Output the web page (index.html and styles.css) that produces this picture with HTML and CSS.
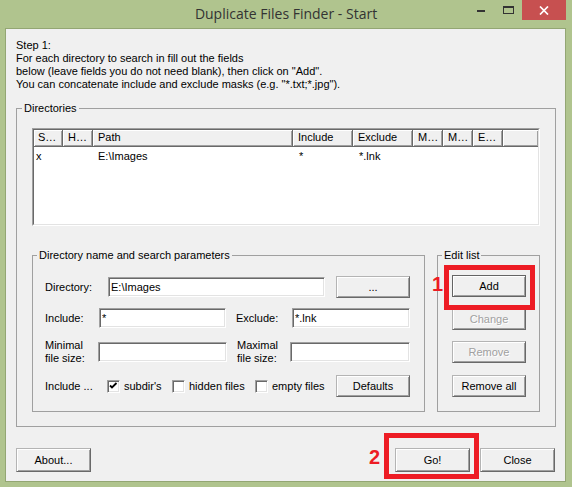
FILE: index.html
```html
<!DOCTYPE html>
<html>
<head>
<meta charset="utf-8">
<link rel="stylesheet" href="styles.css">
</head>
<body>
<div class="window">
  <div class="titlebar">
    <div></div>
    <div class="title">Duplicate Files Finder - Start</div>
    <div class="controls">
      <span class="ctl-min"></span>
      <span class="ctl-max"></span>
      <span class="ctl-close"><svg width="10" height="9" viewBox="0 0 10 9"><path d="M1 0.5 L9 8.5 M9 0.5 L1 8.5" stroke="#fff" stroke-width="1.7" fill="none"/></svg></span>
    </div>
  </div>
  <div class="client">
    <p class="intro">Step 1:<br>For each directory to search in fill out the fields<br>below (leave fields you do not need blank), then click on "Add".<br>You can concatenate include and exclude masks (e.g. "*.txt;*.jpg").</p>
    <fieldset class="group dirs">
      <legend class="lg-dirs">Directories</legend>
      <div class="listview">
        <div class="lv-inner">
          <div class="lv-head">
            <span class="c c1">S…</span><span class="c c2">H…</span><span class="c c3">Path</span><span class="c c4">Include</span><span class="c c5">Exclude</span><span class="c c6">M…</span><span class="c c6">M…</span><span class="c c6">E…</span><span class="c c7"></span>
          </div>
          <div class="lv-row">
            <span class="c c1">x</span><span class="c c2"></span><span class="c c3">E:\Images</span><span class="c c4">*</span><span class="c c5">*.lnk</span><span class="c c6"></span><span class="c c6"></span><span class="c c6"></span><span class="c c7"></span>
          </div>
        </div>
      </div>
      <div class="lower">
        <fieldset class="group params">
          <legend class="lg-params">Directory name and search parameters</legend>
          <div class="row r1">
            <span class="lbl l-dir">Directory:</span>
            <input class="input in-dir" type="text" value="E:\Images">
            <button class="btn btn-side gap11">...</button>
          </div>
          <div class="row r2">
            <span class="lbl l-inc">Include:</span>
            <input class="input in-inc" type="text" value="*">
            <span class="lbl l-exc gap10">Exclude:</span>
            <input class="input in-exc" type="text" value="*.lnk">
          </div>
          <div class="row r3">
            <span class="lbl l-min">Minimal<br>file size:</span>
            <input class="input in-min" type="text" value="">
            <span class="lbl l-max gap10">Maximal<br>file size:</span>
            <input class="input in-max" type="text" value="">
          </div>
          <div class="row r4">
            <span class="lbl l-incl">Include ...</span>
            <span class="cb-item w1"><span class="cb"><svg width="11" height="11" viewBox="0 0 11 11"><polyline points="2,4.5 4,6.5 8.5,2" fill="none" stroke="#000" stroke-width="1.8"/></svg></span>subdir's</span>
            <span class="cb-item w2"><span class="cb"></span>hidden files</span>
            <span class="cb-item w3"><span class="cb"></span>empty files</span>
            <button class="btn btn-side">Defaults</button>
          </div>
        </fieldset>
        <fieldset class="group editlist">
          <legend class="lg-edit">Edit list</legend>
          <button class="btn btn-edit default b-add">Add</button>
          <button class="btn btn-edit disabled b-change">Change</button>
          <button class="btn btn-edit disabled b-remove">Remove</button>
          <button class="btn btn-edit b-removeall">Remove all</button>
        </fieldset>
      </div>
    </fieldset>
    <div class="bottom">
      <button class="btn btn-bottom">About...</button>
      <button class="btn btn-bottom push">Go!</button>
      <button class="btn btn-bottom gap10">Close</button>
    </div>
  </div>
  <div class="mark mark-add"></div>
  <div class="mark mark-go"></div>
  <span class="num num1">1</span>
  <span class="num num2">2</span>
</div>
</body>
</html>
```
FILE: styles.css
```css
* { box-sizing: border-box; }
body {
  margin: 0;
  background: #b0c48e;
  font-family: "Liberation Sans", Arial, sans-serif;
  font-size: 11px;
  color: #000;
}
.window {
  position: relative;
  width: 572px;
  height: 487px;
  display: flex;
  flex-direction: column;
  overflow: hidden;
}
.titlebar {
  height: 28px;
  display: grid;
  grid-template-columns: 1fr auto 1fr;
  align-items: center;
}
.title {
  font-family: "Open Sans", "Noto Sans", sans-serif;
  font-size: 14px;
  color: #333;
  line-height: 28px;
  white-space: nowrap;
}
.controls {
  align-self: start;
  display: flex;
  justify-content: flex-end;
  align-items: flex-start;
}
.ctl-min {
  width: 8px;
  height: 2px;
  background: #333;
  margin: 10px 18px 0 0;
}
.ctl-max {
  width: 11px;
  height: 8px;
  border: 1px solid #333;
  border-top-width: 2px;
  margin: 6px 8px 0 0;
}
.ctl-close {
  width: 44px;
  height: 20px;
  background: #c75050;
  margin-right: 6px;
  display: flex;
  align-items: center;
  justify-content: center;
}
.client {
  margin-left: 5px;
  width: 561px;
  height: 454px;
  border: 1px solid #93a673;
  background: #f0f0f0;
  padding: 10px 10px 0 10px;
}
.intro {
  margin: 0;
  line-height: 13px;
  white-space: nowrap;
}
.group {
  margin: 0;
  min-width: 0;
  border: 1px solid #a0a0a0;
}
.group legend {
  padding: 0 2px;
  line-height: 14px;
  white-space: nowrap;
}
.dirs {
  margin-top: 10px;
  width: 540px;
  padding: 13px 0 14px 15px;
}
.lg-dirs { margin-left: -10px; }
.lg-params { margin-left: -8px; }
.lg-edit { margin-left: -10px; }

.listview {
  width: 508px;
  height: 98px;
  border: 1px solid;
  border-color: #a0a0a0 #fff #fff #a0a0a0;
}
.lv-inner {
  height: 100%;
  border: 1px solid;
  border-color: #696969 #e3e3e3 #e3e3e3 #696969;
  background: #fff;
}
.lv-head, .lv-row {
  display: flex;
}
.c {
  flex: none;
  overflow: hidden;
  white-space: nowrap;
  padding-left: 5px;
}
.c1 { width: 29px; padding-left: 4px; }
.c2 { width: 30px; }
.c3 { width: 200px; }
.c4 { width: 60px; }
.c5 { width: 60px; }
.c6 { width: 30px; }
.c7 { width: 35px; }
.lv-head .c {
  height: 17px;
  line-height: 15px;
  background: #f0f0f0;
  border-right: 1px solid #696969;
  border-bottom: 1px solid #696969;
  box-shadow: inset 1px 1px #fff, inset -1px -1px #a0a0a0;
}
.lv-head .c7 { border-right: none; }
.lv-row .c {
  height: 18px;
  line-height: 18px;
}
.lv-row .c1 { padding-left: 2px; }
.lv-row .c4, .lv-row .c5 { padding-left: 6px; }

.lower {
  display: flex;
  gap: 12px;
  margin-top: 22px;
  width: 508px;
}
.params {
  width: 393px;
  padding: 14px 14px 14px 12px;
}
.editlist {
  width: 103px;
  padding: 13px 13px 0 14px;
  display: flex;
  flex-direction: column;
  align-items: flex-start;
}
.row {
  display: flex;
  align-items: center;
}
.r1 { height: 22px; }
.r2 { height: 20px; margin-top: 10px; }
.r3 { height: 26px; margin-top: 11px; }
.r4 { height: 22px; margin-top: 10px; }
.lbl {
  flex: none;
  line-height: 13px;
  white-space: nowrap;
}
.l-dir { width: 63px; }
.l-inc { width: 54px; }
.l-exc { width: 56px; }
.l-min { width: 53px; }
.l-max { width: 53px; }
.l-incl { width: 62px; }

.input {
  flex: none;
  height: 20px;
  margin: 0;
  padding: 0 2px;
  font: inherit;
  color: #000;
  background: #fff;
  border: 1px solid;
  border-color: #a0a0a0 #fff #fff #a0a0a0;
  box-shadow: inset 1px 1px #696969, inset -1px -1px #e3e3e3;
  outline: none;
}
.in-dir { width: 217px; }
.in-inc { width: 127px; }
.in-exc { width: 118px; }
.in-min { width: 129px; }
.in-max { width: 120px; }

.cb-item {
  flex: none;
  display: flex;
  align-items: center;
  white-space: nowrap;
}
.w1 { width: 65px; }
.w2 { width: 83px; }
.w3 { width: 81px; }
.cb {
  width: 13px;
  height: 13px;
  margin-right: 4px;
  background: #fff;
  border: 1px solid;
  border-color: #a0a0a0 #fff #fff #a0a0a0;
  box-shadow: inset 1px 1px #696969, inset -1px -1px #e3e3e3;
  display: flex;
}

.btn {
  flex: none;
  margin: 0;
  padding: 0;
  font: inherit;
  color: #000;
  background: #f0f0f0;
  border: 1px solid;
  border-color: #b4b4b4 #696969 #696969 #b4b4b4;
  box-shadow: inset 1px 1px #fff, inset -1px -1px #a0a0a0;
  white-space: nowrap;
}
.btn-side { width: 74px; height: 22px; }
.btn-edit { width: 74px; height: 22px; }
.default { border-color: #646464; }
.disabled { color: #a0a0a0; text-shadow: 1px 1px #fff; }
.b-change { margin-top: 11px; }
.b-remove { margin-top: 11px; }
.b-removeall { margin-top: 12px; }

.bottom {
  display: flex;
  margin-top: 21px;
}
.btn-bottom { width: 75px; height: 24px; }
.push { margin-left: auto; }

.gap10 { margin-left: 10px; }
.gap11 { margin-left: 11px; }

.mark {
  position: absolute;
  border: 5px solid #ed1c24;
}
.mark-add { left: 444px; top: 265px; width: 91px; height: 45px; }
.mark-go { left: 384px; top: 433px; width: 95px; height: 46px; }
.num {
  position: absolute;
  font-family: "Liberation Sans", Arial, sans-serif;
  font-weight: bold;
  font-size: 20px;
  line-height: 20px;
  color: #ed1c24;
}
.num1 { left: 432px; top: 274px; }
.num2 { left: 369px; top: 447px; }
```
